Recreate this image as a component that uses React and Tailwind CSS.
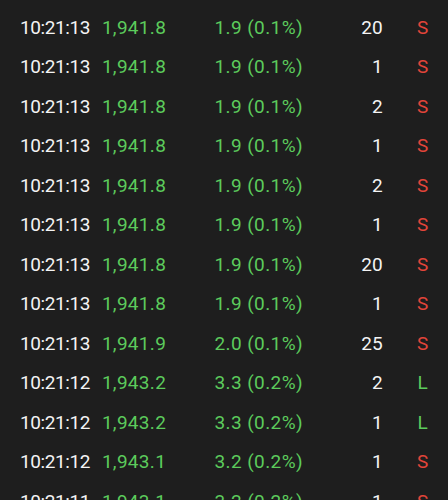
const trades = [
  { time: '10:21:13', price: '1,941.8', change: '1.9 (0.1%)', qty: 20, side: 'S' },
  { time: '10:21:13', price: '1,941.8', change: '1.9 (0.1%)', qty: 1, side: 'S' },
  { time: '10:21:13', price: '1,941.8', change: '1.9 (0.1%)', qty: 2, side: 'S' },
  { time: '10:21:13', price: '1,941.8', change: '1.9 (0.1%)', qty: 1, side: 'S' },
  { time: '10:21:13', price: '1,941.8', change: '1.9 (0.1%)', qty: 2, side: 'S' },
  { time: '10:21:13', price: '1,941.8', change: '1.9 (0.1%)', qty: 1, side: 'S' },
  { time: '10:21:13', price: '1,941.8', change: '1.9 (0.1%)', qty: 20, side: 'S' },
  { time: '10:21:13', price: '1,941.8', change: '1.9 (0.1%)', qty: 1, side: 'S' },
  { time: '10:21:13', price: '1,941.9', change: '2.0 (0.1%)', qty: 25, side: 'S' },
  { time: '10:21:12', price: '1,943.2', change: '3.3 (0.2%)', qty: 2, side: 'L' },
  { time: '10:21:12', price: '1,943.2', change: '3.3 (0.2%)', qty: 1, side: 'L' },
  { time: '10:21:12', price: '1,943.1', change: '3.2 (0.2%)', qty: 1, side: 'S' },
  { time: '10:21:11', price: '1,943.1', change: '3.2 (0.2%)', qty: 1, side: 'S' },
];

export default function App() {
  return (
    <div className="h-[500px] w-[448px] overflow-hidden bg-[#1e1e1e] pt-2 font-['Roboto',sans-serif] text-[19px]">
      {trades.map((t, i) => (
        <div key={i} className="flex h-[39.5px] items-center whitespace-nowrap pl-5">
          {/* time */}
          <span className="w-[76px] text-left tracking-[-0.4px] text-[#f4f4f4]">{t.time}</span>
          {/* price */}
          <span className="w-[76px] text-center tracking-[0.3px] text-[#5ccb5c]">{t.price}</span>
          {/* change */}
          <span className="mr-[-0.4px] w-[131px] text-right tracking-[0.4px] text-[#5ccb5c]">
            {t.change}
          </span>
          {/* qty */}
          <span className="w-[80px] text-right text-[#f4f4f4]">{t.qty}</span>
          <span
            className={`ml-5 w-10 text-center ${t.side === 'S' ? 'text-[#e2453a]' : 'text-[#5ccb5c]'}`}
          >
            {t.side}
          </span>
        </div>
      ))}
    </div>
  );
}
